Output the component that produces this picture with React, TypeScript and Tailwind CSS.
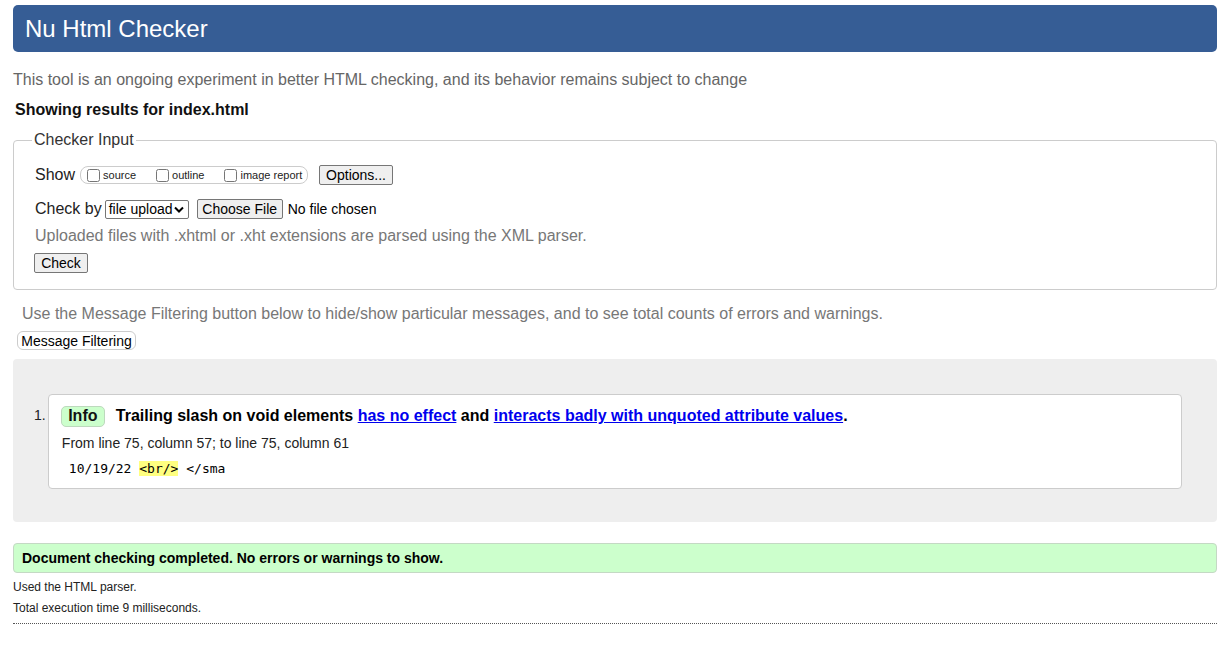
import type { ReactNode } from 'react'

const FONT = { fontFamily: '"Liberation Sans", Arial, sans-serif' }

function Btn({ children, className = '' }: { children: ReactNode; className?: string }) {
  return (
    <button
      type="button"
      className={`flex h-[20px] items-center justify-center whitespace-nowrap rounded-[2px] border border-[#767676] bg-[#efefef] px-0 text-[14px] leading-none text-black ${className}`}
    >
      {children}
    </button>
  )
}

function Opt({ label, gap }: { label: string; gap: string }) {
  return (
    <label className={`flex items-center ${gap}`}>
      <input type="checkbox" className="m-0 h-[13px] w-[13px]" />
      <span className="ml-[3px] text-[11px] leading-none text-[#222]">{label}</span>
    </label>
  )
}

export default function App() {
  return (
    <div style={FONT} className="min-h-screen bg-white px-[13px] pt-[5px] text-[16px] text-[#222]">
      <header className="flex h-[47px] items-center rounded-[5px] bg-[#365d95] pl-[12px] text-[24px] text-white">
        Nu Html Checker
      </header>

      <p className="mt-[18px] leading-[20px] text-[#666]">
        This tool is an ongoing experiment in better HTML checking, and its behavior remains subject to change
      </p>
      <p className="mt-[10px] pl-[2px] font-bold leading-[20px] text-[#111]">Showing results for index.html</p>

      <fieldset className="mt-[10px] rounded-[4px] border border-[#ccc] px-[21px] pb-[16px]">
        <legend className="-ml-[3px] px-[2px] leading-[20px] text-[#333]">Checker Input</legend>

        <div className="mt-[15px] flex h-[20px] items-center">
          <span>Show</span>
          <div className="ml-[5px] flex h-[18px] w-[228px] items-center rounded-[8px] border border-[#ccc] pl-[6px]">
            <Opt label="source" gap="" />
            <Opt label="outline" gap="ml-[20px]" />
            <Opt label="image report" gap="ml-[20px]" />
          </div>
          <Btn className="ml-[11px] w-[74px]">Options...</Btn>
        </div>

        <div className="mt-[14px] flex h-[20px] items-center">
          <span>Check by</span>
          <span className="ml-[3px] flex h-[19px] w-[84px] items-center justify-between rounded-[2px] border border-[#767676] pl-[3px] pr-[4px] text-[14px] leading-none text-black">
            file upload
            <svg width="10" height="7" viewBox="0 0 10 7" fill="none" stroke="black" strokeWidth="2">
              <path d="M1 1.5 5 5.5 9 1.5" />
            </svg>
          </span>
          <Btn className="ml-[8px] h-[19px] w-[86px]">Choose File</Btn>
          <span className="ml-[5px] text-[14px] text-black">No file chosen</span>
        </div>

        <p className="mt-[7px] leading-[20px] text-[#777]">
          Uploaded files with .xhtml or .xht extensions are parsed using the XML parser.
        </p>

        <Btn className="-ml-px mt-[7px] h-[19px] w-[54px]">Check</Btn>
      </fieldset>

      <p className="mt-[14px] pl-[9px] leading-[20px] text-[#777]">
        Use the Message Filtering button below to hide/show particular messages, and to see total counts of errors and
        warnings.
      </p>
      <button
        type="button"
        className="ml-[4px] mt-[7px] flex h-[19px] w-[119px] items-center justify-center rounded-[6px] border border-[#ccc] bg-white text-[14px] leading-none text-black"
      >
        Message Filtering
      </button>

      <section className="mt-[9px] rounded-[4px] bg-[#eeeeee] pb-[33px] pl-[21px] pr-[35px] pt-[35px]">
        <ol className="flex">
          <li className="flex w-full">
            <span className="mt-[14px] w-[14px] text-[14px] leading-none text-[#222]">1.</span>
            <div className="w-full rounded-[4px] border border-[#ccc] bg-white pb-[11px] pl-[12px] pt-[9px]">
              <div className="flex items-center">
                <span className="flex h-[21px] w-[44px] items-center justify-center rounded-[5px] border border-[#bdd9bd] bg-[#ccffcc] font-bold text-[#111]">
                  Info
                </span>
                <p className="ml-[11px] font-bold text-black">
                  Trailing slash on void elements{' '}
                  <a href="#" className="text-[#0000ee] underline">
                    has no effect
                  </a>{' '}
                  and{' '}
                  <a href="#" className="text-[#0000ee] underline">
                    interacts badly with unquoted attribute values
                  </a>
                  .
                </p>
              </div>
              <p className="mt-[6px] pl-px text-[14px] leading-[18px] text-[#222]">
                From line 75, column 57; to line 75, column 61
              </p>
              <p
                className="mt-[9px] pl-[8px] text-[13px] leading-[16px] text-black"
                style={{ fontFamily: '"DejaVu Sans Mono", "Liberation Mono", monospace' }}
              >
                10/19/22 <mark className="bg-[#ffff80] text-black">&lt;br/&gt;</mark> &lt;/sma
              </p>
            </div>
          </li>
        </ol>
      </section>

      <div className="mt-[21px] flex h-[30px] items-center rounded-[4px] border border-[#c4d9c4] bg-[#ccffcc] pl-[8px] text-[14px] font-bold text-black">
        Document checking completed. No errors or warnings to show.
      </div>
      <p className="mt-[6px] text-[12px] leading-[16px] text-[#222]">Used the HTML parser.</p>
      <p className="mt-[5px] text-[12px] leading-[16px] text-[#222]">Total execution time 9 milliseconds.</p>
      <div className="mt-[7px] border-b border-dotted border-[#555]" />
    </div>
  )
}
